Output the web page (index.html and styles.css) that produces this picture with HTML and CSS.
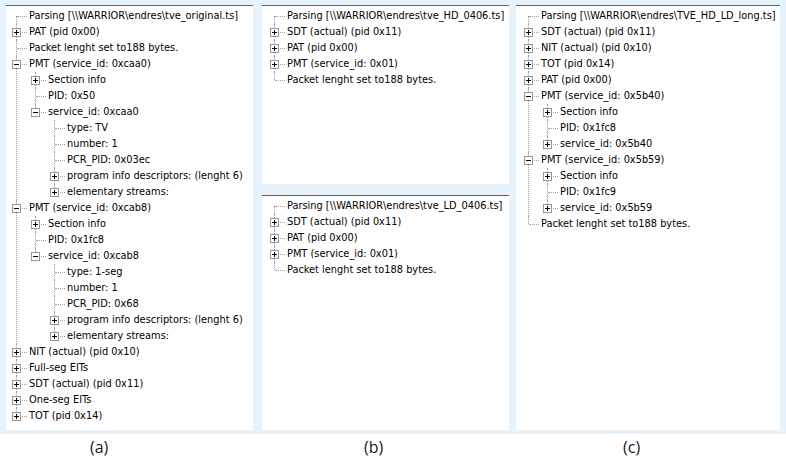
FILE: index.html
```html
<!DOCTYPE html>
<html>
<head>
<meta charset="utf-8">
<link rel="stylesheet" href="styles.css">
</head>
<body>
<div class="figure">
  <div class="panel panel-a">
    <ul class="tree">
      <li><div class="row">Parsing [\\WARRIOR\endres\tve_original.ts]</div></li>
      <li><div class="row"><span class="box plus"></span>PAT (pid 0x00)</div></li>
      <li><div class="row">Packet lenght set to188 bytes.</div></li>
      <li><div class="row"><span class="box"></span>PMT (service_id: 0xcaa0)</div>
        <ul>
          <li><div class="row"><span class="box plus"></span>Section info</div></li>
          <li><div class="row">PID: 0x50</div></li>
          <li><div class="row"><span class="box"></span>service_id: 0xcaa0</div>
            <ul>
              <li><div class="row">type: TV</div></li>
              <li><div class="row">number: 1</div></li>
              <li><div class="row">PCR_PID: 0x03ec</div></li>
              <li><div class="row"><span class="box plus"></span>program info descriptors: (lenght 6)</div></li>
              <li><div class="row"><span class="box plus"></span>elementary streams:</div></li>
            </ul>
          </li>
        </ul>
      </li>
      <li><div class="row"><span class="box"></span>PMT (service_id: 0xcab8)</div>
        <ul>
          <li><div class="row"><span class="box plus"></span>Section info</div></li>
          <li><div class="row">PID: 0x1fc8</div></li>
          <li><div class="row"><span class="box"></span>service_id: 0xcab8</div>
            <ul>
              <li><div class="row">type: 1-seg</div></li>
              <li><div class="row">number: 1</div></li>
              <li><div class="row">PCR_PID: 0x68</div></li>
              <li><div class="row"><span class="box plus"></span>program info descriptors: (lenght 6)</div></li>
              <li><div class="row"><span class="box plus"></span>elementary streams:</div></li>
            </ul>
          </li>
        </ul>
      </li>
      <li><div class="row"><span class="box plus"></span>NIT (actual) (pid 0x10)</div></li>
      <li><div class="row"><span class="box plus"></span>Full-seg EITs</div></li>
      <li><div class="row"><span class="box plus"></span>SDT (actual) (pid 0x11)</div></li>
      <li><div class="row"><span class="box plus"></span>One-seg EITs</div></li>
      <li><div class="row"><span class="box plus"></span>TOT (pid 0x14)</div></li>
    </ul>
  </div>
  <div class="col-b">
    <div class="panel panel-b1">
      <ul class="tree">
        <li><div class="row">Parsing [\\WARRIOR\endres\tve_HD_0406.ts]</div></li>
        <li><div class="row"><span class="box plus"></span>SDT (actual) (pid 0x11)</div></li>
        <li><div class="row"><span class="box plus"></span>PAT (pid 0x00)</div></li>
        <li><div class="row"><span class="box plus"></span>PMT (service_id: 0x01)</div></li>
        <li><div class="row">Packet lenght set to188 bytes.</div></li>
      </ul>
    </div>
    <div class="panel panel-b2">
      <ul class="tree">
        <li><div class="row">Parsing [\\WARRIOR\endres\tve_LD_0406.ts]</div></li>
        <li><div class="row"><span class="box plus"></span>SDT (actual) (pid 0x11)</div></li>
        <li><div class="row"><span class="box plus"></span>PAT (pid 0x00)</div></li>
        <li><div class="row"><span class="box plus"></span>PMT (service_id: 0x01)</div></li>
        <li><div class="row">Packet lenght set to188 bytes.</div></li>
      </ul>
    </div>
  </div>
  <div class="panel panel-c">
    <ul class="tree">
      <li><div class="row">Parsing [\\WARRIOR\endres\TVE_HD_LD_long.ts]</div></li>
      <li><div class="row"><span class="box plus"></span>SDT (actual) (pid 0x11)</div></li>
      <li><div class="row"><span class="box plus"></span>NIT (actual) (pid 0x10)</div></li>
      <li><div class="row"><span class="box plus"></span>TOT (pid 0x14)</div></li>
      <li><div class="row"><span class="box plus"></span>PAT (pid 0x00)</div></li>
      <li><div class="row"><span class="box"></span>PMT (service_id: 0x5b40)</div>
        <ul>
          <li><div class="row"><span class="box plus"></span>Section info</div></li>
          <li><div class="row">PID: 0x1fc8</div></li>
          <li><div class="row"><span class="box plus"></span>service_id: 0x5b40</div></li>
        </ul>
      </li>
      <li><div class="row"><span class="box"></span>PMT (service_id: 0x5b59)</div>
        <ul>
          <li><div class="row"><span class="box plus"></span>Section info</div></li>
          <li><div class="row">PID: 0x1fc9</div></li>
          <li><div class="row"><span class="box plus"></span>service_id: 0x5b59</div></li>
        </ul>
      </li>
      <li><div class="row">Packet lenght set to188 bytes.</div></li>
    </ul>
  </div>
</div>
<div class="labels">
  <span class="label label-a">(a)</span>
  <span class="label label-b">(b)</span>
  <span class="label label-c">(c)</span>
</div>
</body>
</html>
```

FILE: styles.css
```css
html, body {
  margin: 0;
  padding: 0;
  background: #ffffff;
}

body {
  width: 786px;
  height: 461px;
  overflow: hidden;
}

.figure {
  display: flex;
  height: 434px;
  box-sizing: border-box;
  padding: 5px 6px 4px 6px;
  background: #e6f2fc;
}

.panel {
  background: #ffffff;
  border-top: 1px solid #646464;
  box-sizing: border-box;
  overflow: hidden;
}

.panel-a {
  width: 247px;
}

.col-b {
  width: 247px;
  margin: 0 7px 0 9px;
  display: flex;
  flex-direction: column;
  gap: 11px;
}

.panel-b1 {
  height: 179px;
}

.panel-b2 {
  flex: 1;
}

.panel-c {
  width: 264px;
}

.tree {
  margin: 0;
  padding: 2px 0 0 0;
  list-style: none;
  font-family: "DejaVu Sans Condensed", "DejaVu Sans", sans-serif;
  font-stretch: condensed;
  font-size: 10.9px;
  color: #000000;
}

.panel-b1 .tree,
.panel-b2 .tree,
.panel-c .tree {
  padding-left: 2px;
}

.tree ul {
  margin: 0;
  padding: 0 0 0 19px;
  list-style: none;
}

.tree li {
  position: relative;
}

/* vertical connector line */
.tree li::before {
  content: "";
  position: absolute;
  left: 10px;
  top: 0;
  bottom: 0;
  border-left: 1px dotted #a0a0a0;
}

.tree > li:first-child::before {
  top: 8px;
}

.tree li:last-child::before {
  bottom: auto;
  height: 8px;
}

.row {
  position: relative;
  height: 16px;
  line-height: 16px;
  padding-left: 23px;
  white-space: nowrap;
}

/* horizontal connector line */
.row::before {
  content: "";
  position: absolute;
  left: 11px;
  top: 8px;
  width: 10px;
  border-top: 1px dotted #a0a0a0;
}

.box {
  position: absolute;
  left: 6px;
  top: 4px;
  width: 9px;
  height: 9px;
  box-sizing: border-box;
  border: 1px solid #919b9c;
  background: #ffffff;
  z-index: 1;
}

.box::before {
  content: "";
  position: absolute;
  left: 1px;
  top: 3px;
  width: 5px;
  height: 1px;
  background: #000000;
}

.box.plus::after {
  content: "";
  position: absolute;
  left: 3px;
  top: 1px;
  width: 1px;
  height: 5px;
  background: #000000;
}

.labels {
  display: grid;
  grid-template-columns: 247px 247px 264px;
  padding: 2px 0 0 6px;
  font-family: "Open Sans", "Liberation Sans", sans-serif;
  font-size: 16px;
  line-height: 22px;
  color: #1a1a1a;
}

.label-a {
  padding-left: 84px;
}

.label-b {
  padding-left: 111px;
}

.label-c {
  padding-left: 123px;
}
```
